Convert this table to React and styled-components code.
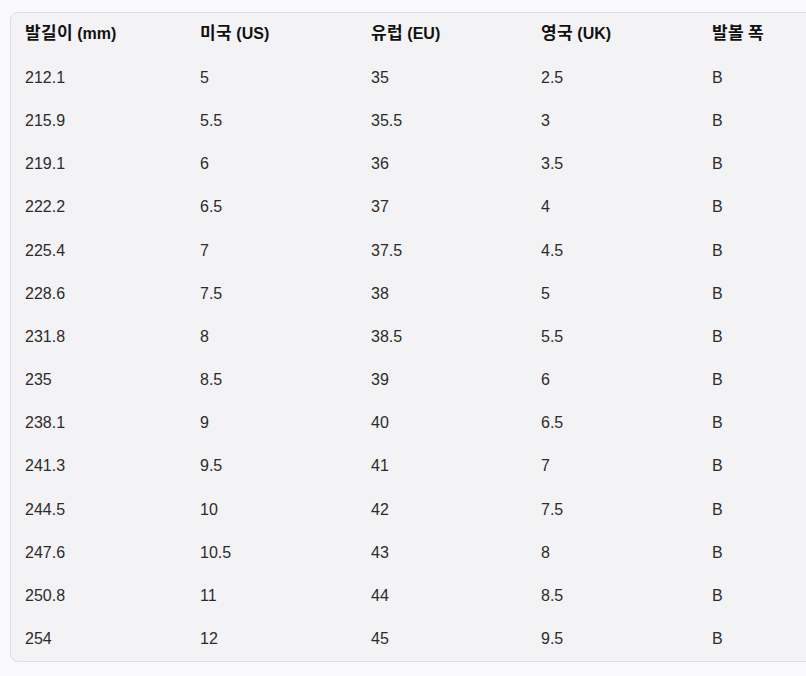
import React from 'react'
import styled, { createGlobalStyle } from 'styled-components'

const GlobalStyle = createGlobalStyle`
  body {
    margin: 0;
    background: #f9f9fb;
    font-family: "Liberation Sans", "Noto Sans CJK KR", sans-serif;
    color: #1f1f1f;
  }
`

const Page = styled.div`
  padding: 12px 0 0 10px;
  width: 806px;
  height: 676px;
  box-sizing: border-box;
  overflow: hidden;
`

const Card = styled.div`
  width: 820px;
  background: #f3f3f5;
  border: 1px solid #dedee2;
  border-radius: 8px;
  box-sizing: border-box;
`

const Row = styled.div`
  display: grid;
  grid-template-columns: 175px 171px 170px 171px 1fr;
  height: 43.2px;
  box-sizing: border-box;
  align-items: center;
  padding-left: 14px;
  padding-bottom: ${p => (p.$head ? '4px' : '0')};
  font-size: 16px;
  font-weight: ${p => (p.$head ? 700 : 400)};
  color: ${p => (p.$head ? '#111' : '#2b2b2b')};
`

const Cell = styled.div`
  white-space: nowrap;
  line-height: 20px;
`

const Ko = styled.span`
  font-family: "Noto Sans CJK KR", sans-serif;
  font-size: 17px;
  font-weight: 600;
  letter-spacing: 0.3px;
`

const heads = [
  ['발길이', ' (mm)'],
  ['미국', ' (US)'],
  ['유럽', ' (EU)'],
  ['영국', ' (UK)'],
  ['발볼 폭', ''],
]

const rows = [
  ['212.1', '5', '35', '2.5'],
  ['215.9', '5.5', '35.5', '3'],
  ['219.1', '6', '36', '3.5'],
  ['222.2', '6.5', '37', '4'],
  ['225.4', '7', '37.5', '4.5'],
  ['228.6', '7.5', '38', '5'],
  ['231.8', '8', '38.5', '5.5'],
  ['235', '8.5', '39', '6'],
  ['238.1', '9', '40', '6.5'],
  ['241.3', '9.5', '41', '7'],
  ['244.5', '10', '42', '7.5'],
  ['247.6', '10.5', '43', '8'],
  ['250.8', '11', '44', '8.5'],
  ['254', '12', '45', '9.5'],
]

const App = () => (
  <Page>
    <GlobalStyle />
    <Card>
      <Row $head>
        {heads.map(([ko, en]) => (
          <Cell key={ko}>
            <Ko>{ko}</Ko>{en}
          </Cell>
        ))}
      </Row>
      {rows.map(r => (
        <Row key={r[0]}>
          {[...r, 'B'].map((c, i) => <Cell key={i}>{c}</Cell>)}
        </Row>
      ))}
    </Card>
  </Page>
)

export default App
